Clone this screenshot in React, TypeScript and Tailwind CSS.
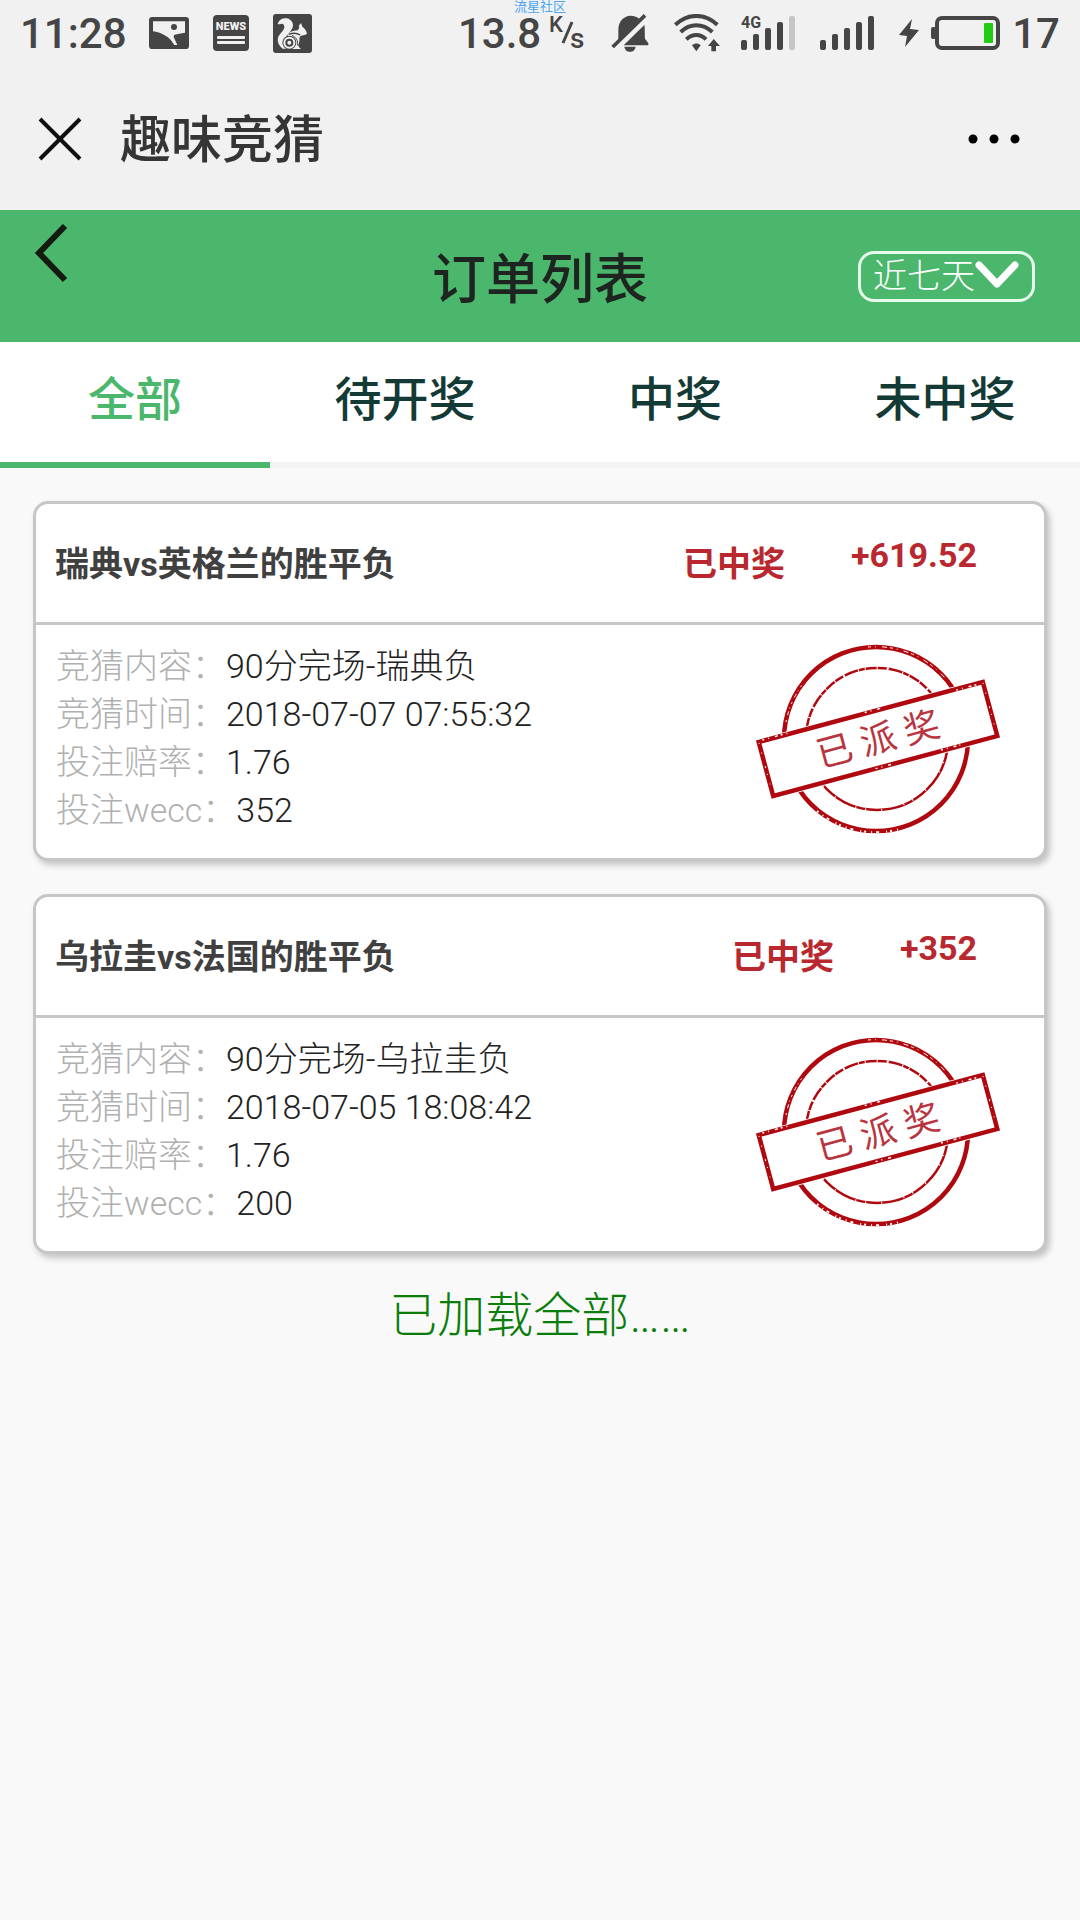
import { useState } from "react";

type Order = {
  id: number;
  title: string;
  amount: string;
  rows: { label: string; value: string }[];
};

const orders: Order[] = [
  {
    id: 1,
    title: "瑞典vs英格兰的胜平负",
    amount: "+619.52",
    rows: [
      { label: "竞猜内容：", value: "90分完场-瑞典负" },
      { label: "竞猜时间：", value: "2018-07-07 07:55:32" },
      { label: "投注赔率：", value: "1.76" },
      { label: "投注wecc：", value: "352" },
    ],
  },
  {
    id: 2,
    title: "乌拉圭vs法国的胜平负",
    amount: "+352",
    rows: [
      { label: "竞猜内容：", value: "90分完场-乌拉圭负" },
      { label: "竞猜时间：", value: "2018-07-05 18:08:42" },
      { label: "投注赔率：", value: "1.76" },
      { label: "投注wecc：", value: "200" },
    ],
  },
];

const tabs = ["全部", "待开奖", "中奖", "未中奖"];

function PictureIcon() {
  return (
    <svg width="40" height="32" viewBox="0 0 120 96" aria-hidden="true">
      <rect width="120" height="96" rx="10" fill="#454545" />
      <path
        d="M12 13H108V47C96 49 86 51 77 53C74 55 73 58 75 62L85 84H76L66 70C56 58 36 46 12 43Z"
        fill="#f1f1f1"
      />
      <circle cx="75" cy="30" r="9" fill="#454545" />
    </svg>
  );
}

function NewsIcon() {
  return (
    <svg width="36" height="36" viewBox="0 0 36 36" role="img" aria-label="NEWS">
      <rect width="36" height="36" rx="4" fill="#454545" />
      <text x="18" y="15" textAnchor="middle" fontSize="11" fontWeight="900" fontFamily="Roboto, sans-serif" fill="#f1f1f1">
        NEWS
      </text>
      <rect x="4" y="21" width="28" height="3" rx="1" fill="#f1f1f1" />
      <rect x="4" y="26" width="28" height="3" rx="1" fill="#f1f1f1" />
    </svg>
  );
}

function SquirrelIcon() {
  return (
    <svg width="39" height="39" viewBox="0 0 117 117" aria-hidden="true">
      <rect width="117" height="117" rx="9" fill="#454545" />
      <path
        d="M14 29C19 16 30 11 41 13C57 16 64 31 58 43C53 54 44 58 38 70C35 84 37 96 48 104H29C15 94 11 78 17 66C23 55 32 50 34 41C35 32 29 28 23 30C20 31 16 31 14 29Z"
        fill="#f1f1f1"
      />
      <path
        d="M43 62C49 54 60 50 74 49L79 41L77 36L84 27L88 38C96 43 101 51 102 60C95 64 86 64 80 68C79 76 80 84 76 92C74 97 80 100 84 105H58Z"
        fill="#f1f1f1"
      />
      <path d="M47 61C60 56 72 57 82 63" fill="none" stroke="#454545" strokeWidth="4" />
      <circle cx="49" cy="86" r="21" fill="#454545" />
      <circle cx="49" cy="86" r="18" fill="#f1f1f1" />
      <circle cx="49" cy="86" r="12" fill="#454545" />
      <circle cx="49" cy="86" r="6" fill="#f1f1f1" />
      <path d="M57 64C70 70 76 80 73 94" fill="none" stroke="#454545" strokeWidth="3" />
    </svg>
  );
}

function MutedBellIcon() {
  return (
    <svg width="38" height="38" viewBox="0 0 114 114" aria-hidden="true">
      <path d="M22 82V48C22 22 38 6 58 5C70 5 80 9 86 16L24 79ZM44 88L100 33C102 40 101 58 102 74L112 88V94H38Z" fill="#454545" />
      <path d="M40 98H74C72 109 65 113 57 113C49 113 42 109 40 98Z" fill="#454545" />
      <path d="M5 99L102 4" stroke="#454545" strokeWidth="11" />
    </svg>
  );
}

function WifiIcon() {
  return (
    <svg width="46" height="38" viewBox="0 0 138 114" aria-hidden="true">
      <g fill="none" stroke="#454545" strokeWidth="12">
        <path d="M4 32C42 -3 92 -3 130 32" />
        <path d="M20 54C48 27 86 27 115 54" />
        <path d="M37 76C55 59 79 59 96 76" />
      </g>
      <path d="M54 94C62 87 73 87 80 94L67 112Z" fill="#454545" />
      <path d="M119 75L138 96H126V112H112V96H102Z" fill="#454545" />
    </svg>
  );
}

function SignalIcon({ network, weak }: { network?: string; weak?: boolean }) {
  return (
    <svg className="overflow-visible" width="54" height="36" viewBox="0 0 54 36" role="img" aria-label="信号">
      {network && (
        <text x="0" y="13" fontSize="16" fontWeight="700" fontFamily="Roboto, sans-serif" fill="#454545">
          {network}
        </text>
      )}
      <g fill="#454545">
        <rect x="0" y="25" width="6" height="10" rx="2" />
        <rect x="12" y="19" width="6" height="16" rx="2" />
        <rect x="24" y="13" width="6" height="22" rx="2" />
        <rect x="36" y="7" width="6" height="28" rx="2" />
        <rect x="48" y="1" width="6" height="34" rx="2" fill={weak ? "#c6c6c6" : "#454545"} />
      </g>
    </svg>
  );
}

function StatusBar() {
  return (
    <div className="relative flex h-[66px] items-center justify-between px-5 text-[42px] font-medium text-[#454545]">
      <div className="flex items-center">
        <span>11:28</span>
        <div className="ml-[22px] flex items-center gap-6">
          <PictureIcon />
          <NewsIcon />
          <SquirrelIcon />
        </div>
      </div>
      <span className="absolute inset-x-0 top-0 text-center text-[13px] leading-[13px] font-normal text-[#4aa6ee]">流星社区</span>
      <div className="flex items-center">
        <span>13.8</span>
        <svg className="ml-2 overflow-visible" width="36" height="36" viewBox="0 0 36 36" role="img" aria-label="K/s">
          <text x="0" y="17" fontSize="22" fontWeight="500" fontFamily="Roboto, sans-serif" fill="#454545">K</text>
          <text x="21" y="33" fontSize="28" fontWeight="500" fontFamily="Roboto, sans-serif" fill="#454545">s</text>
          <path d="M23 7L14 28" stroke="#454545" strokeWidth="3" />
        </svg>
        <div className="ml-[26px] flex items-center gap-[25px]">
          <MutedBellIcon />
          <WifiIcon />
          <div className="-ml-1">
            <SignalIcon network="4G" weak />
          </div>
          <SignalIcon />
          <div className="flex items-center gap-3">
            <svg width="20" height="28" viewBox="0 0 20 28" aria-hidden="true">
              <path d="M13 0L0 16L8 17L6 28L20 11L11 10Z" fill="#454545" />
            </svg>
            <svg width="69" height="34" viewBox="0 0 69 34" role="img" aria-label="电池">
              <rect x="6" y="2" width="61" height="30" rx="5" fill="none" stroke="#454545" strokeWidth="4" />
              <rect x="0" y="11" width="5" height="12" rx="2" fill="#454545" />
              <rect x="53" y="7" width="9" height="20" rx="1" fill="#22cc11" />
            </svg>
            <span>17</span>
          </div>
        </div>
      </div>
    </div>
  );
}

function TitleBar() {
  return (
    <div className="flex h-36 items-center pt-0.5 pr-[60px] pl-[38px]">
      <button type="button" aria-label="关闭">
        <svg width="44" height="44" viewBox="0 0 44 44" aria-hidden="true">
          <path d="M2 2L42 42M42 2L2 42" stroke="#111" strokeWidth="4" />
        </svg>
      </button>
      <h1 className="ml-[38px] flex-1 pt-1 text-[51px] font-medium text-[#353535]">趣味竞猜</h1>
      <button type="button" aria-label="更多">
        <svg width="52" height="10" viewBox="0 0 52 10" aria-hidden="true">
          <circle cx="5" cy="5" r="4.5" />
          <circle cx="26" cy="5" r="4.5" />
          <circle cx="47" cy="5" r="4.5" />
        </svg>
      </button>
    </div>
  );
}

function Stamp() {
  return (
    <svg className="shrink-0" width="252" height="196" viewBox="12 12 252 196" role="img" aria-label="已派奖">
      <g fill="none" stroke="#b0080f">
        <circle cx="136" cy="109" r="92" strokeWidth="4.5" />
        <circle cx="137" cy="109" r="71" strokeWidth="2.5" />
        {/* worn ink along the rings */}
        <g stroke="#fff">
          <path d="M46 92A92 92 0 0 1 62 55" strokeWidth="1" strokeDasharray="2 5 4 3 1 4" />
          <path d="M128 17A92 92 0 0 1 205 48" strokeWidth="1" strokeDasharray="3 4 1 6 5 3" />
          <path d="M77 181A92 92 0 0 0 160 199" strokeWidth="2" strokeDasharray="2 5 1 4 3 7 1 3" />
          <path d="M69 88A71 71 0 0 1 190 62" strokeWidth="3" strokeDasharray="1 9 2 14 1 6 1 11" />
          <path d="M83 156A71 71 0 0 0 206 122" strokeWidth="2" strokeDasharray="1 15 1 22 1 9" />
        </g>
      </g>
      <g transform="rotate(-15 138 109)">
        <rect x="20" y="78" width="236" height="62" fill="#fff" />
        <rect x="22" y="81" width="232" height="56" fill="none" stroke="#b0080f" strokeWidth="4.5" />
        <path
          d="M22 82L22 136M254 82V136"
          stroke="#fff"
          strokeWidth="1"
          strokeDasharray="1 9 1 13 2 6"
        />
        <path
          d="M26 80H52M132 80H148M226 82H250M128 137H146M196 136H216"
          stroke="#fff"
          strokeWidth="1.5"
          strokeDasharray="2 4 1 6 3 3"
        />
        <g fontSize="36" fontFamily="Roboto, 'Noto Sans CJK SC', sans-serif" fill="#b83540" textAnchor="middle">
          <text x="93" y="122">已</text>
          <text x="138" y="122">派</text>
          <text x="183" y="122">奖</text>
        </g>
      </g>
    </svg>
  );
}

function OrderCard({ order }: { order: Order }) {
  return (
    <article className="rounded-[15px] border-[3px] border-[#c6c6c6] bg-white shadow-[3px_4px_6px_rgba(0,0,0,0.22)]">
      <header className="flex h-[121px] items-start justify-between border-b-[3px] border-[#c6c6c6] pt-[33px] pr-[67px] pl-[19px] text-[34px] font-bold">
        <h3 className="leading-[54px] text-[#404040]">{order.title}</h3>
        <div className="flex items-start gap-[66px] text-[#b8282e]">
          <span className="leading-[54px]">已中奖</span>
          <span className="leading-9">{order.amount}</span>
        </div>
      </header>
      <div className="flex items-start justify-between pt-[17px] pr-10 pb-5 pl-5">
        <dl className="text-[34px] leading-[48px] font-light">
          {order.rows.map((row) => (
            <div key={row.label} className="flex">
              <dt className="text-[#b0b0b0]">{row.label}</dt>
              <dd className="text-[#222]">{row.value}</dd>
            </div>
          ))}
        </dl>
        <Stamp />
      </div>
    </article>
  );
}

export default function App() {
  const [active, setActive] = useState(0);
  return (
    <div className="min-h-screen bg-[#f9f9f9] font-[Roboto,'Noto_Sans_CJK_SC',sans-serif]">
      <div className="bg-[#f1f1f1]">
        <StatusBar />
        <TitleBar />
      </div>

      <header className="grid h-[132px] grid-cols-[1fr_auto_1fr] items-center bg-[#4bb76d] px-[34px]">
        <button type="button" aria-label="返回" className="mt-3.5 self-start justify-self-start">
          <svg width="34" height="60" viewBox="0 0 34 60" aria-hidden="true">
            <path d="M31 2L5 29L31 56" fill="none" stroke="#141a10" strokeWidth="6" />
          </svg>
        </button>
        <h2 className="pt-2 text-[54px] font-medium text-[#1e2420]">订单列表</h2>
        <div className="relative mr-[11px] justify-self-end">
          <select
            aria-label="时间范围"
            defaultValue="7"
            className="block h-[51px] w-[177px] appearance-none rounded-2xl border-[3px] border-[#e6fbec] pl-3 text-[34px] leading-[45px] font-light text-white"
          >
            <option value="7">近七天</option>
            <option value="30">近一月</option>
          </select>
          <svg className="pointer-events-none absolute top-2.5 right-4" width="44" height="28" viewBox="0 0 44 28" aria-hidden="true">
            <path d="M4 4L22 23L40 4" fill="none" stroke="#fff" strokeWidth="7" strokeLinecap="round" strokeLinejoin="round" />
          </svg>
        </div>
      </header>

      <nav className="grid grid-cols-4 bg-[#f4f4f4]">
        {tabs.map((tab, i) => (
          <button
            key={tab}
            type="button"
            onClick={() => setActive(i)}
            className={
              i === active
                ? "h-[126px] border-b-[6px] border-[#4bb76d] bg-white bg-clip-padding pb-1 text-[47px] font-medium text-[#4bb76d]"
                : "h-[126px] border-b-[6px] border-transparent bg-white bg-clip-padding pb-1 text-[47px] font-medium text-[#143a35]"
            }
          >
            {tab}
          </button>
        ))}
      </nav>

      <main className="flex flex-col gap-[33px] px-[33px] pt-[33px]">
        {orders.map((order) => (
          <OrderCard key={order.id} order={order} />
        ))}
        <p className="text-center text-[48px] leading-[58px] font-light text-[#0a7d0a]">已加载全部……</p>
      </main>
    </div>
  );
}
